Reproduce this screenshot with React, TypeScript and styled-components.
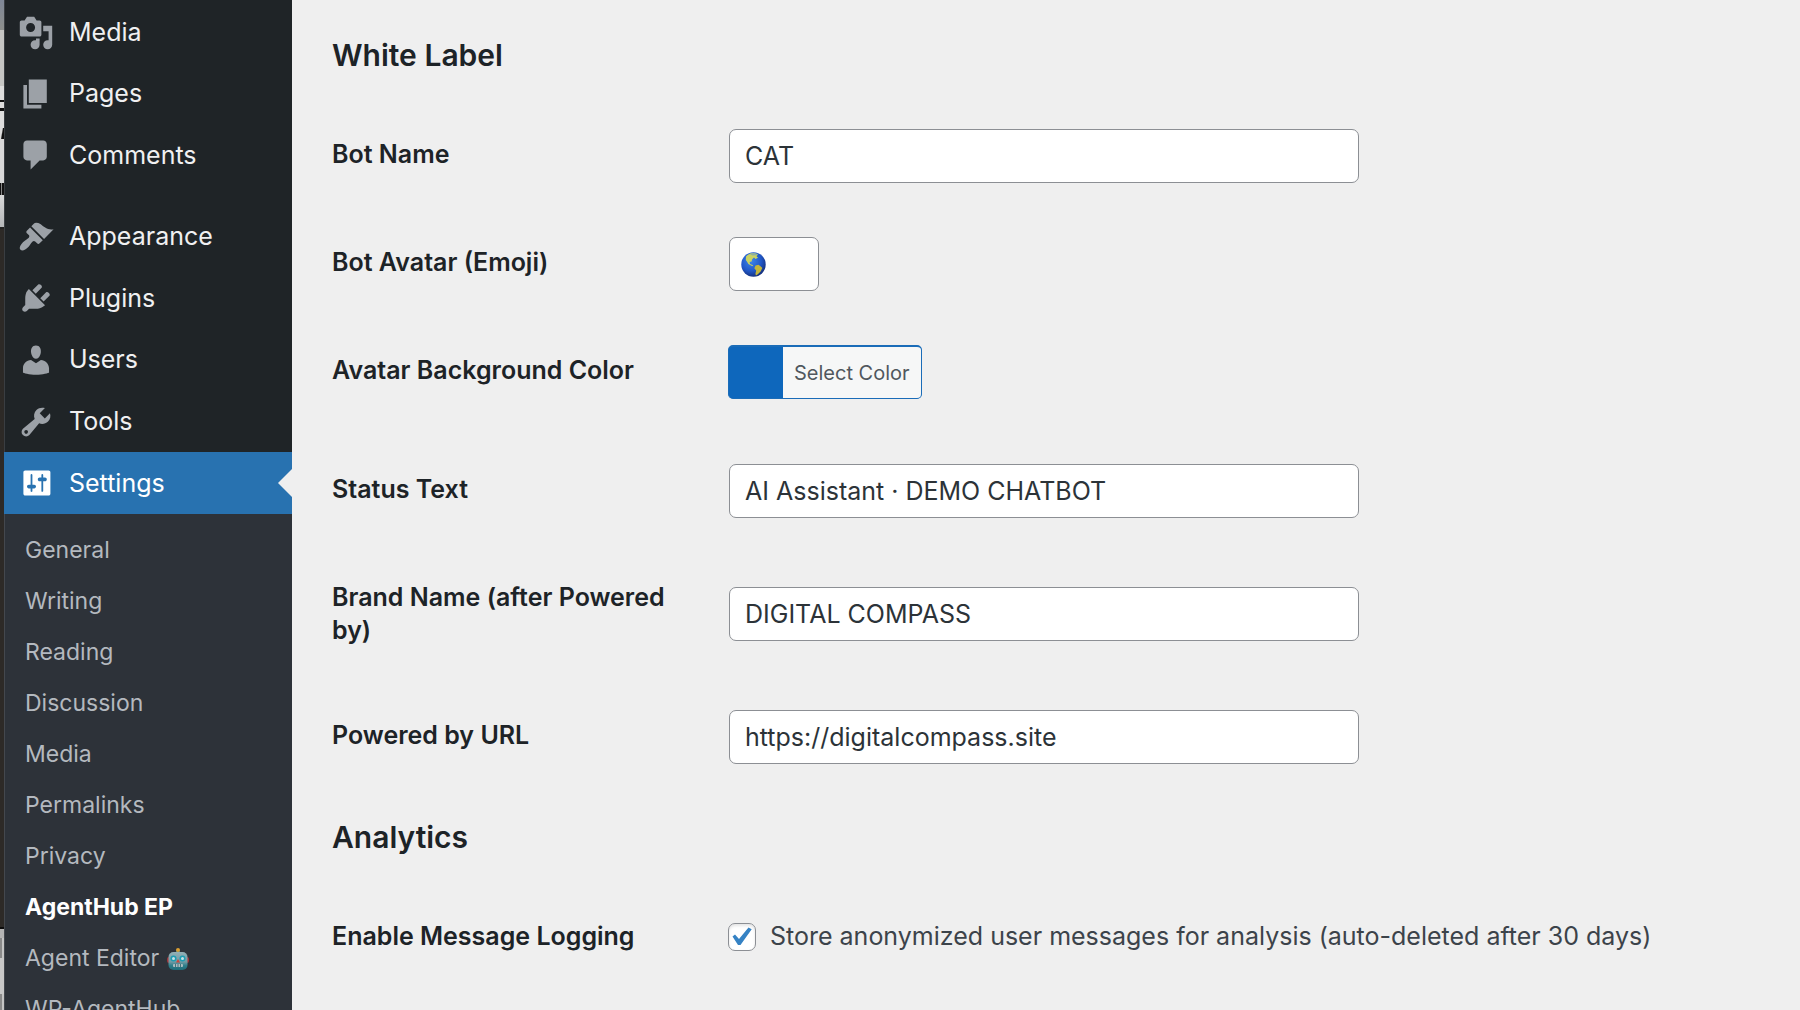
import React, { useState } from "react";
import styled, { createGlobalStyle } from "styled-components";

const GlobalStyle = createGlobalStyle`
  * { box-sizing: border-box; }
  body {
    margin: 0;
    background: #efefef;
    color: #3c434a;
    font-family: Inter, "Liberation Sans", sans-serif;
    font-size: 25px;
    line-height: 33px;
  }
  input, button { font-family: inherit; }
`;

const Shell = styled.div`
  display: flex;
  height: 100vh;
  overflow: hidden;
`;

/* Sliver of the window that lies behind the admin page */
const Backdrop = styled.div`
  flex: none;
  width: 4px;
  display: flex;
  flex-direction: column;
  overflow: hidden;
`;

const Band = styled.div<{ $height?: number; $fill: string }>`
  flex: ${(p) => (p.$height ? "none" : "1")};
  height: ${(p) => (p.$height ? `${p.$height}px` : "auto")};
  background: ${(p) => p.$fill};
`;

const Sidebar = styled.nav`
  flex: none;
  width: 288px;
  background: #1f2427;
  box-shadow: inset 1px 0 #3a3e42;
`;

const MenuGroup = styled.ul<{ $height: number; $gap: number }>`
  list-style: none;
  margin: ${(p) => p.$gap}px 0 0;
  padding: 0;
  display: flex;
  flex-direction: column;
  min-height: ${(p) => p.$height}px;
`;

const MenuItem = styled.li`
  flex: 1;
  display: flex;
`;

const MenuLink = styled.a<{ $active?: boolean }>`
  position: relative;
  flex: 1;
  display: flex;
  align-items: center;
  gap: 15px;
  padding-left: 14px;
  color: ${(p) => (p.$active ? "#ffffff" : "#f0f0f1")};
  background: ${(p) => (p.$active ? "#2872b0" : "transparent")};
  text-decoration: none;

  svg {
    width: 36px;
    height: 36px;
    flex: none;
    fill: ${(p) => (p.$active ? "#ffffff" : "#9ca1a7")};
  }

  &::after {
    content: "";
    display: ${(p) => (p.$active ? "block" : "none")};
    position: absolute;
    right: 0;
    top: 50%;
    margin-top: -14px;
    border: 14px solid transparent;
    border-left-width: 0;
    border-right-color: #efefef;
  }
`;

const Submenu = styled.ul`
  list-style: none;
  margin: 0;
  padding: 11px 0;
  background: #2d3239;
  box-shadow: inset 1px 0 #44484e;
`;

const SubLink = styled.a<{ $current?: boolean }>`
  display: flex;
  align-items: center;
  gap: 8px;
  height: 51px;
  padding-left: 21px;
  font-size: 23px;
  font-weight: ${(p) => (p.$current ? 700 : 400)};
  color: ${(p) => (p.$current ? "#ffffff" : "#b4b9bf")};
  text-decoration: none;

  svg { width: 22px; height: 24px; }
`;

const Content = styled.main`
  flex: 1;
  min-width: 0;
  padding: 9px 40px 0;
`;

const SectionTitle = styled.h2`
  margin: 28px 0 29px;
  font-size: 30px;
  line-height: 36px;
  font-weight: 600;
  color: #1d2327;
`;

const Row = styled.div`
  display: grid;
  grid-template-columns: 342px minmax(0, 1fr);
  column-gap: 54px;
`;

const RowLabel = styled.label`
  padding: 36px 0;
  font-weight: 600;
  color: #1d2327;
`;

const Field = styled.div<{ $extra?: boolean }>`
  position: relative;
  align-self: center;
  display: flex;
  align-items: center;
  padding: 27px 0 ${(p) => (p.$extra ? 38 : 27)}px 1px;
`;

const TextInput = styled.input<{ $small?: boolean }>`
  width: 100%;
  max-width: ${(p) => (p.$small ? 90 : 630)}px;
  height: 54px;
  padding: 0 15px;
  border: 1px solid #8c8f94;
  border-radius: 7px;
  background: #ffffff;
  color: #2c3338;
  font-size: 25px;
`;

const AvatarMark = styled.span`
  position: absolute;
  left: 13px;
  display: flex;
  pointer-events: none;

  svg { width: 25px; height: 25px; }
`;

const ColorButton = styled.button`
  display: flex;
  align-items: stretch;
  height: 54px;
  margin-left: -1px;
  padding: 0;
  overflow: hidden;
  border: 1px solid #1a6cb8;
  border-top-width: 2px;
  border-radius: 5px;
  background: #0e67bc;
  color: #50575e;
  font-size: 20px;
`;

const ColorCaption = styled.span`
  display: flex;
  align-items: center;
  margin-left: 54px;
  padding: 0 11px;
  background: #f6f7f7;
`;

const CheckLabel = styled.label`
  display: flex;
  align-items: center;
  gap: 14px;
  margin-left: -1px;
`;

const CheckHolder = styled.span`
  position: relative;
  display: flex;

  svg {
    position: absolute;
    inset: 0;
    pointer-events: none;
  }
`;

const Checkbox = styled.input`
  appearance: none;
  width: 28px;
  height: 28px;
  margin: 0;
  border: 1px solid #8c8f94;
  border-radius: 7px;
  background: #ffffff;
  box-shadow: inset 0 2px 3px rgba(0, 0, 0, 0.1);
`;

const icons = {
  media:
    "M13 11V4c0-.55-.45-1-1-1h-1.67L9 1H5L3.67 3H2c-.55 0-1 .45-1 1v7c0 .55.45 1 1 1h10c.55 0 1-.45 1-1zM7 4.5c1.38 0 2.5 1.12 2.5 2.5S8.38 9.5 7 9.5 4.5 8.38 4.5 7 5.62 4.5 7 4.5zM14 6h5v10.5c0 1.38-1.12 2.5-2.5 2.5S14 17.88 14 16.5s1.12-2.5 2.5-2.5c.17 0 .34.02.5.05V9h-3V6zm-4 8.05V13h2v3.5c0 1.38-1.12 2.5-2.5 2.5S7 17.88 7 16.5 8.12 14 9.5 14c.17 0 .34.02.5.05z",
  pages: "M6 15V2h10v13H6zm-1 1h8v2H3V5h2v11z",
  comments:
    "M5 2h9c1.1 0 2 .9 2 2v7c0 1.1-.9 2-2 2h-2l-5 5v-5H5c-1.1 0-2-.9-2-2V4c0-1.1.9-2 2-2z",
  appearance:
    "M14.48 11.06L7.41 3.99l1.5-1.5c.5-.56 2.3-.47 3.51.32 1.21.8 1.43 1.28 2.91 2.1 1.18.64 2.45 1.26 4.45.85zm-.71.71L6.7 4.7 4.93 6.47c-.39.39-.39 1.02 0 1.41l1.06 1.06c.39.39.39 1.03 0 1.42-.6.6-1.43 1.11-2.21 1.69-.35.26-.7.53-1.01.84C1.43 14.23.4 16.08 1.4 17.07c.99 1 2.84-.03 4.18-1.36.31-.31.58-.66.85-1.02.57-.78 1.08-1.61 1.69-2.21.39-.39 1.02-.39 1.41 0l1.06 1.06c.39.39 1.02.39 1.41 0z",
  plugins:
    "M13.11 4.36L9.87 7.6 8 5.73l3.24-3.24c.35-.34 1.05-.2 1.56.32.52.51.66 1.21.31 1.55zm-8 1.77l.91-1.12 9.01 9.01-1.19.84c-.71.71-2.63 1.16-3.82 1.16H6.14L4.9 17.26c-.59.59-1.54.59-2.12 0-.59-.58-.59-1.53 0-2.12l1.24-1.24v-3.88c0-1.13.4-3.19 1.09-3.89zm7.26 3.97l3.24-3.24c.34-.35 1.04-.21 1.55.31.52.51.66 1.21.31 1.55l-3.24 3.25z",
  users:
    "M10 9.25c-2.27 0-2.73-3.44-2.73-3.44C7 4.02 7.82 2 9.97 2c2.16 0 2.98 2.02 2.71 3.81 0 0-.41 3.44-2.68 3.44zm0 2.57L12.72 10c2.39 0 4.52 2.33 4.52 4.53v2.49s-3.65 1.13-7.24 1.13c-3.65 0-7.24-1.13-7.24-1.13v-2.49c0-2.25 1.94-4.48 4.47-4.48z",
  tools:
    "M16.68 9.77c-1.34 1.34-3.3 1.67-4.95.99l-5.41 6.52c-.99.99-2.59.99-3.58 0s-.99-2.59 0-3.57l6.52-5.42c-.68-1.65-.35-3.61.99-4.95 1.28-1.28 3.12-1.62 4.72-1.06l-2.89 2.89 2.82 2.82 2.86-2.87c.53 1.58.18 3.39-1.08 4.65zM3.81 16.21c.4.39 1.04.39 1.43 0 .4-.4.4-1.04 0-1.43-.39-.4-1.03-.4-1.43 0-.39.39-.39 1.03 0 1.43z",
  settings:
    "M18 16V4c0-.55-.45-1-1-1H4c-.55 0-1 .45-1 1v12c0 .55.45 1 1 1h13c.55 0 1-.45 1-1zM8 11h1c.55 0 1 .45 1 1s-.45 1-1 1H8v1.5c0 .28-.22.5-.5.5s-.5-.22-.5-.5V13H6c-.55 0-1-.45-1-1s.45-1 1-1h1V5.5c0-.28.22-.5.5-.5s.5.22.5.5V11zm5-2h-1c-.55 0-1-.45-1-1s.45-1 1-1h1V5.5c0-.28.22-.5.5-.5s.5.22.5.5V7h1c.55 0 1 .45 1 1s-.45 1-1 1h-1v5.5c0 .28-.22.5-.5.5s-.5-.22-.5-.5V9z",
};

type IconName = keyof typeof icons;

const contentMenu: [IconName, string][] = [
  ["media", "Media"],
  ["pages", "Pages"],
  ["comments", "Comments"],
];

const adminMenu: [IconName, string][] = [
  ["appearance", "Appearance"],
  ["plugins", "Plugins"],
  ["users", "Users"],
  ["tools", "Tools"],
  ["settings", "Settings"],
];

const submenu = [
  "General",
  "Writing",
  "Reading",
  "Discussion",
  "Media",
  "Permalinks",
  "Privacy",
  "AgentHub EP",
  "Agent Editor",
  "WP-AgentHub",
];

const Robot = () => (
  <svg viewBox="0 0 22 24" aria-hidden="true">
    <defs>
      <linearGradient id="robotFace" x1="0" y1="0" x2="0" y2="1">
        <stop offset="0" stopColor="#93b0b6" />
        <stop offset="0.55" stopColor="#6f9aa3" />
        <stop offset="0.75" stopColor="#2f7f8b" />
        <stop offset="1" stopColor="#1d6b78" />
      </linearGradient>
    </defs>
    <rect x="0" y="10" width="22" height="6" rx="2" fill="#a3343a" />
    <path d="M9 3h4v4H9z" fill="#3b7f94" />
    <circle cx="11" cy="3" r="2" fill="#dba032" />
    <rect x="1.5" y="5" width="19" height="18" rx="5" fill="url(#robotFace)" />
    <circle cx="6.5" cy="11.5" r="3" fill="#1d9db3" />
    <circle cx="15.5" cy="11.5" r="3" fill="#1d9db3" />
    <circle cx="6.5" cy="11.5" r="1.5" fill="#c9dfe3" />
    <circle cx="15.5" cy="11.5" r="1.5" fill="#c9dfe3" />
    <path d="M11 12l2 3.5H9z" fill="#c9463c" />
    <rect x="6" y="17" width="10" height="3" rx="1" fill="#a9bcc0" />
    <path d="M8.5 17v3M11 17v3M13.5 17v3" stroke="#2d5f6a" strokeWidth="0.8" />
  </svg>
);

const Globe = () => (
  <svg viewBox="0 0 25 25" aria-hidden="true">
    <defs>
      <radialGradient id="ocean" cx="0.4" cy="0.35" r="0.7">
        <stop offset="0" stopColor="#3d86ea" />
        <stop offset="0.6" stopColor="#2158c8" />
        <stop offset="1" stopColor="#152c74" />
      </radialGradient>
    </defs>
    <circle cx="12.5" cy="12.5" r="12.2" fill="url(#ocean)" />
    <path
      d="M5 4.5C7 2.5 9.500 1.200 12 1l5 1.200-1.500 2 1.500 1.600-2.500 1.200-1.500-1.500-1.800 1.800-.6 2.200-2 .6.500 2 2.400.8.900 1.400-2-.5-3-1.800-1.500-2.500L4.800 8z"
      fill="#c9d264"
    />
    <path
      d="M14.5 13.5l3-.8 2.300 1.800 1.500 1.500-1.500 3.200-3 3-1.800 1.300-.6-1.500.8-3.500-1.900-2.200z"
      fill="#c4b63c"
    />
    <path d="M8.5 1.800c2.500-1.200 5.500-1 8 .2l-1 1.200-4 .3z" fill="#8fb0a0" />
  </svg>
);

const MenuLinks = ({ items }: { items: [IconName, string][] }) => (
  <>
    {items.map(([icon, title]) => (
      <MenuItem key={title}>
        <MenuLink href="#" $active={icon === "settings"}>
          <svg viewBox="0 0 20 20" aria-hidden="true">
            <path d={icons[icon]} />
          </svg>
          {title}
        </MenuLink>
      </MenuItem>
    ))}
  </>
);

function TextRow({ id, label, value }: { id: string; label: string; value: string }) {
  return (
    <Row>
      <RowLabel htmlFor={id}>{label}</RowLabel>
      <Field>
        <TextInput id={id} type="text" defaultValue={value} />
      </Field>
    </Row>
  );
}

export default function App() {
  const [logging, setLogging] = useState(true);

  return (
    <Shell>
      <GlobalStyle />
      <Backdrop aria-hidden="true">
        <Band $height={30} $fill="linear-gradient(#7f8797, #8d8f8c)" />
        <Band $height={56} $fill="#c6c6c4" />
        <Band $height={14} $fill="#dddddd" />
        <Band $height={2} $fill="#111111" />
        <Band $height={6} $fill="#dddddd" />
        <Band $height={3} $fill="#111111" />
        <Band $height={17} $fill="#dddddd" />
        <Band $height={11} $fill="linear-gradient(100deg, #dddddd 40%, #111111 60%)" />
        <Band $height={44} $fill="#d8d8d8" />
        <Band $height={12} $fill="linear-gradient(90deg, #111111 30%, #888888 30% 50%, #111111 50%)" />
        <Band $height={32} $fill="linear-gradient(#d8d8d8, #b4b6b8)" />
        <Band $height={2} $fill="#222222" />
        <Band $fill="#2d2a27" />
        <Band $height={2} $fill="#0c0c0c" />
        <Band $height={9} $fill="#b4b4b4" />
        <Band $height={20} $fill="linear-gradient(90deg, #8a8a8a 50%, #c4c4c4 50%)" />
        <Band $height={36} $fill="#c8c8c8" />
        <Band $height={16} $fill="linear-gradient(90deg, #8a8a8a 50%, #c4c4c4 50%)" />
      </Backdrop>

      <Sidebar aria-label="Admin menu">
        <MenuGroup $height={184} $gap={2}>
          <MenuLinks items={contentMenu} />
        </MenuGroup>
        <MenuGroup $height={308} $gap={20}>
          <MenuLinks items={adminMenu} />
        </MenuGroup>
        <Submenu>
          {submenu.map((title) => (
            <li key={title}>
              <SubLink href="#" $current={title === "AgentHub EP"}>
                {title}
                {title === "Agent Editor" && <Robot />}
              </SubLink>
            </li>
          ))}
        </Submenu>
      </Sidebar>

      <Content>
        <SectionTitle>White Label</SectionTitle>
        <TextRow id="bot-name" label="Bot Name" value="CAT" />
        <Row>
          <RowLabel htmlFor="bot-avatar">Bot Avatar (Emoji)</RowLabel>
          <Field>
            <TextInput id="bot-avatar" type="text" $small />
            <AvatarMark>
              <Globe />
            </AvatarMark>
          </Field>
        </Row>
        <Row>
          <RowLabel htmlFor="avatar-color">Avatar Background Color</RowLabel>
          <Field $extra>
            <ColorButton id="avatar-color" type="button">
              <ColorCaption>Select Color</ColorCaption>
            </ColorButton>
          </Field>
        </Row>
        <TextRow id="status-text" label="Status Text" value="AI Assistant · DEMO CHATBOT" />
        <TextRow id="brand-name" label="Brand Name (after Powered by)" value="DIGITAL COMPASS" />
        <TextRow id="powered-url" label="Powered by URL" value="https://digitalcompass.site" />

        <SectionTitle>Analytics</SectionTitle>
        <Row>
          <RowLabel htmlFor="message-logging">Enable Message Logging</RowLabel>
          <Field>
            <CheckLabel>
              <CheckHolder>
                <Checkbox
                  id="message-logging"
                  type="checkbox"
                  checked={logging}
                  onChange={(e) => setLogging(e.target.checked)}
                />
                {logging && (
                  <svg width="28" height="28" viewBox="0 0 28 28" aria-hidden="true">
                    <path
                      d="M4.5 13.5l2.5-2 4 4.5L20.5 4.500l3.200 1.800L12.500 22h-2.500z"
                      fill="#3582c4"
                    />
                  </svg>
                )}
              </CheckHolder>
              Store anonymized user messages for analysis (auto-deleted after 30 days)
            </CheckLabel>
          </Field>
        </Row>
      </Content>
    </Shell>
  );
}
